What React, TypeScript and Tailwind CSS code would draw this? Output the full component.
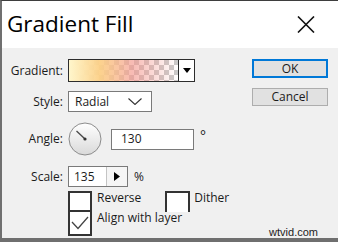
import React from "react";

const Label = ({ children }: { children: React.ReactNode }) => (
  <div className="w-[66px] pr-[5px] text-right shrink-0">{children}</div>
);

const Dial = () => (
  <svg width="34" height="34" viewBox="0 0 34 34" className="shrink-0">
    <defs>
      <linearGradient id="dialFill" x1="0" y1="0" x2="0" y2="1">
        <stop offset="0%" stopColor="#ffffff" />
        <stop offset="100%" stopColor="#d9d9d9" />
      </linearGradient>
    </defs>
    <circle cx="17" cy="17" r="16" fill="url(#dialFill)" stroke="#8c8c8c" strokeWidth="1" />
    <line x1="17" y1="17" x2="8.5" y2="9" stroke="#4a4a4a" strokeWidth="1.3" />
    <circle cx="17" cy="17" r="1.6" fill="#333" />
  </svg>
);

const App = () => {
  return (
    <div className="relative w-[338px] h-[242px] overflow-hidden flex flex-col bg-[#f0f0f0] border-t border-t-[#3e3e3e] border-l-2 border-l-[#707070] border-b-4 border-b-[#6f6f6f] font-['Open_Sans',sans-serif] text-[12px] text-[#1b1b1b]">
      {/* title bar */}
      <div className="h-[47px] shrink-0 bg-white flex items-center justify-between pl-[5px] pr-[22px]">
        <span className="text-[22.5px] leading-none text-black font-['Open_Sans',sans-serif] pb-[1px]">
          Gradient Fill
        </span>
        <svg width="20" height="17" viewBox="0 0 20 17">
          <path d="M2 0.5 L18 16.5 M18 0.5 L2 16.5" stroke="#111" strokeWidth="1.6" fill="none" />
        </svg>
      </div>

      <div className="flex flex-1">
        {/* form */}
        <div className="w-[250px] flex flex-col pt-[11px]">
          <div className="flex items-center h-[23px]">
            <Label>Gradient:</Label>
            <div className="flex w-[127px] h-[23px] border border-[#2d2d2d] bg-white">
              <div className="flex-1 bg-[image:linear-gradient(90deg,#fff6cc_0%,rgba(252,208,135,0.95)_28%,rgba(244,150,140,0.65)_58%,rgba(255,255,255,0)_100%),repeating-conic-gradient(#c9c9c9_0_25%,#ffffff_0_50%)] bg-[length:100%_100%,10px_10px]" />
              <div className="w-[16px] border-l border-[#2d2d2d] flex items-center justify-center">
                <svg width="8" height="5" viewBox="0 0 8 5">
                  <polygon points="0,0 8,0 4,5" fill="#000" />
                </svg>
              </div>
            </div>
          </div>

          <div className="flex items-center h-[21px] mt-[9px]">
            <Label>Style:</Label>
            <div className="flex items-center justify-between w-[84px] h-[21px] border border-[#7a7a7a] bg-white pl-[6px] pr-[9px]">
              <span>Radial</span>
              <svg width="14" height="7" viewBox="0 0 14 7">
                <path d="M0.5 0.5 L7 6.5 L13.5 0.5" stroke="#333" strokeWidth="1.1" fill="none" />
              </svg>
            </div>
          </div>

          <div className="flex items-center h-[34px] mt-[10px]">
            <Label>Angle:</Label>
            <div className="flex items-center">
              <Dial />
              <div className="ml-[9px] w-[83px] h-[21px] border border-[#7a7a7a] bg-white flex items-center pl-[9px]">
                130
              </div>
              <span className="ml-[6px] -mt-[6px] text-[14px] leading-none">°</span>
            </div>
          </div>

          <div className="flex items-center h-[21px] mt-[10px]">
            <Label>Scale:</Label>
            <div className="flex w-[60px] h-[21px] border border-[#7a7a7a] bg-white">
              <div className="w-[37px] flex items-center pl-[5px]">135</div>
              <div className="flex-1 border-l border-[#c4c4c4] bg-[#f5f5f5] flex items-center justify-center">
                <svg width="6" height="9" viewBox="0 0 6 9">
                  <polygon points="0,0 6,4.5 0,9" fill="#000" />
                </svg>
              </div>
            </div>
            <span className="ml-[6px]">%</span>
          </div>

          <div className="flex mt-[4px] pl-[66px]">
            <div className="flex flex-col">
              <div className="flex">
                <div className="w-[24px] h-[21px] border-2 border-[#333] bg-white shrink-0" />
                <span className="ml-[5px] leading-[14px]">Reverse</span>
                <div className="ml-[24px] w-[25px] h-[21px] border-2 border-b-0 border-[#333] bg-white shrink-0" />
                <span className="ml-[4px] leading-[14px]">Dither</span>
              </div>
              <div className="flex -mt-[2px]">
                <div className="w-[24px] h-[26px] border-2 border-[#333] bg-white shrink-0 flex items-center justify-center">
                  <svg width="18" height="14" viewBox="0 0 18 14">
                    <path d="M1 6 L7 12.5 L17 1" stroke="#444" strokeWidth="1.3" fill="none" />
                  </svg>
                </div>
                <span className="ml-[5px] leading-[14px] mt-[1px]">Align with layer</span>
              </div>
            </div>
          </div>
        </div>

        {/* buttons */}
        <div className="w-[76px] flex flex-col pt-[11px]">
          <button className="h-[19px] border-2 border-[#0078d7] bg-[#e1e1e1] text-[12px] leading-none">
            OK
          </button>
          <button className="mt-[10px] h-[18px] border border-[#adadad] bg-[#e1e1e1] text-[12px] leading-none">
            Cancel
          </button>
        </div>
      </div>

      <span className="absolute right-[20px] bottom-[-2px] text-[11px] text-[#222] font-['Liberation_Sans',sans-serif]">
        wtvid.com
      </span>
    </div>
  );
};

export default App;
